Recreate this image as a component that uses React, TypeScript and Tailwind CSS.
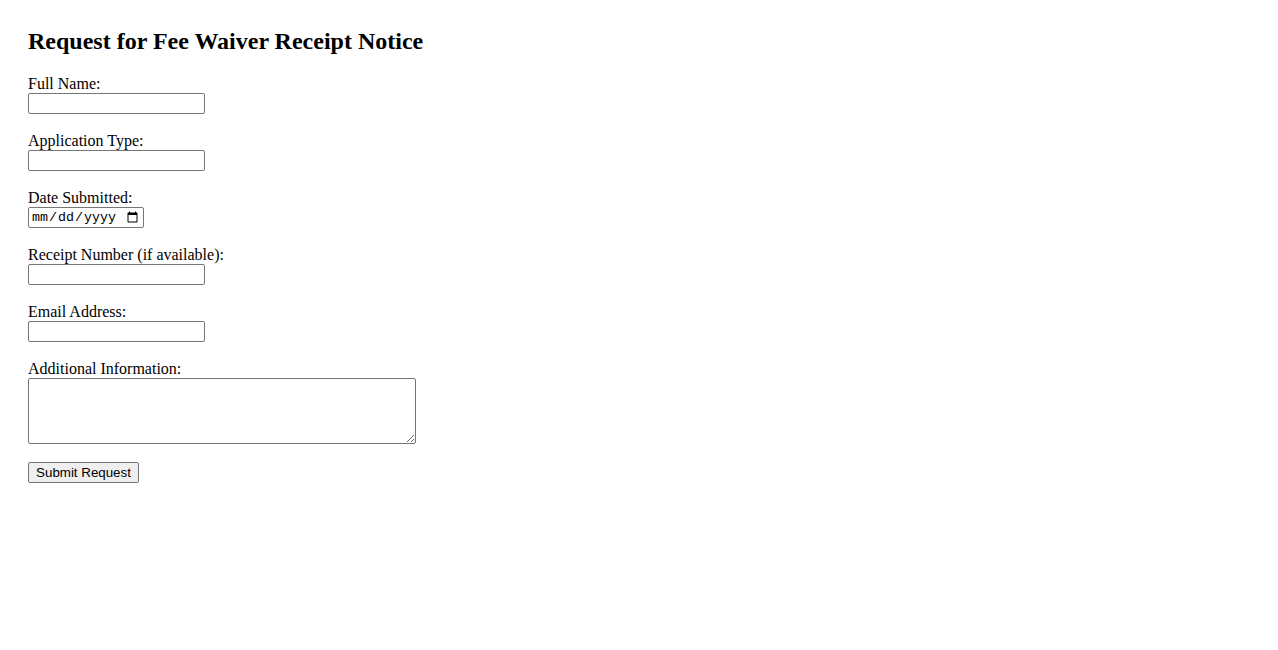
import React from "react";

const inputCls =
  "block w-[177px] h-[21px] border border-[#767676] rounded-[2px] px-[2px] py-[1px] bg-white text-[13.33px] [font-family:'Liberation_Sans',Arial,sans-serif]";

function Field({ label, children }: { label: string; children: React.ReactNode }) {
  return (
    <div className="mb-[18px]">
      <label className="block h-[18px] leading-[18px] text-[16px] text-black">{label}</label>
      {children}
    </div>
  );
}

export default function App() {
  return (
    <div className="min-h-[650px] bg-white pt-[28px] pl-[28px] text-black [font-family:'Liberation_Serif','Times_New_Roman',serif]">
      <h2 className="text-[24px] leading-[27px] font-bold mb-[20px]">Request for Fee Waiver Receipt Notice</h2>
      <form onSubmit={(e) => e.preventDefault()}>
        <Field label="Full Name:">
          <input type="text" className={inputCls} />
        </Field>
        <Field label="Application Type:">
          <input type="text" className={inputCls} />
        </Field>
        <Field label="Date Submitted:">
          <input
            type="date"
            className="block w-[116px] h-[21px] border border-[#767676] rounded-[2px] px-[2px] py-0 bg-white text-[13.33px] leading-[17px] [font-family:'Liberation_Mono','Courier_New',monospace]"
          />
        </Field>
        <Field label="Receipt Number (if available):">
          <input type="text" className={inputCls} />
        </Field>
        <Field label="Email Address:">
          <input type="email" className={inputCls} />
        </Field>
        <Field label="Additional Information:">
          <textarea className="block w-[388px] h-[66px] border border-[#767676] rounded-[2px] px-[2px] py-[2px] bg-white resize text-[13.33px] [font-family:'Liberation_Mono',monospace]" />
        </Field>
        <button
          type="submit"
          className="block w-[111px] h-[21px] border border-[#767676] rounded-[2px] bg-[#efefef] px-[6px] py-[1px] text-[13.33px] leading-[17px] text-black [font-family:'Liberation_Sans',Arial,sans-serif]"
        >
          Submit Request
        </button>
      </form>
    </div>
  );
}
